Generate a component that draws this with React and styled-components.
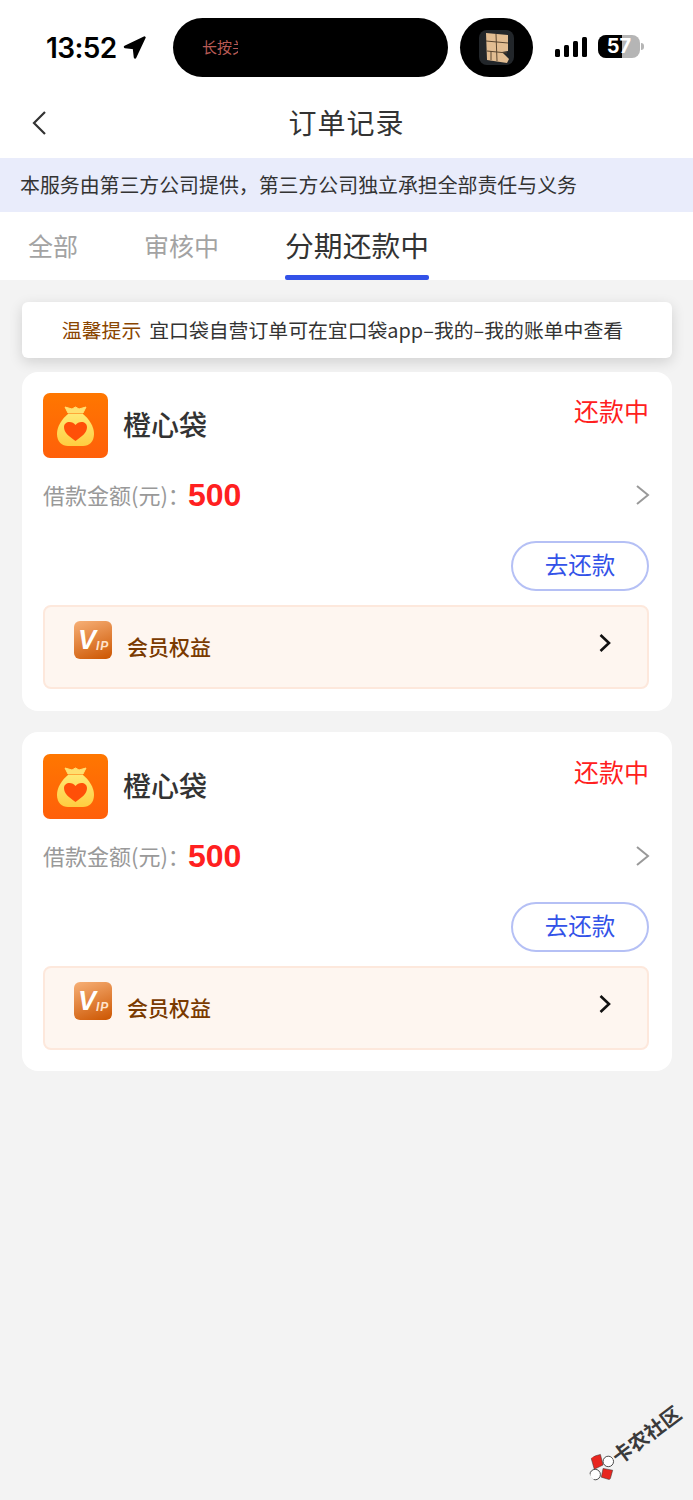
import React from 'react';
import styled, { createGlobalStyle } from 'styled-components';

const GlobalStyle = createGlobalStyle`
  html, body {
    margin: 0;
    padding: 0;
    background: #f3f3f3;
  }
  * {
    box-sizing: border-box;
  }
`;

const orders = [1, 2];

export default function App() {
  return (
    <Page>
      <GlobalStyle />
      <StatusBar>
        <Clock>
          13:52
          <svg width="23" height="23" viewBox="0 0 22 22">
            <path d="M20.5 1.5 L2 10.5 L10.5 11.5 L11.5 20.5 Z" fill="#000" stroke="#000" strokeWidth="2.4" strokeLinejoin="round" />
          </svg>
        </Clock>
        <Island>
          <IslandText>长按关注</IslandText>
        </Island>
        <IslandRound>
          <AppThumb>
            <svg width="24" height="30" viewBox="0 0 24 30">
              <path d="M1 0 L23 2 L23 18 L17 19 L20 22 L24 26 L22 30 L2 27 Z" fill="#e2bd92" />
              <path d="M1 8 L23 10 M2 18 L22 20 M11 1 L12 28 M6 18 L6 27" stroke="#5a4630" strokeWidth="1" fill="none" />
            </svg>
          </AppThumb>
        </IslandRound>
        <Signal>
          <SignalBar $h={8} />
          <SignalBar $h={12} />
          <SignalBar $h={16} />
          <SignalBar $h={20} />
        </Signal>
        <Battery>
          <BatteryLevel />
          <BatteryText>57</BatteryText>
          <BatteryCap />
        </Battery>
      </StatusBar>

      <NavBar>
        <BackButton>
          <svg width="16" height="26" viewBox="0 0 16 26">
            <path d="M14 2 L3 13 L14 24" fill="none" stroke="#333" strokeWidth="2.2" />
          </svg>
        </BackButton>
        <NavTitle>订单记录</NavTitle>
      </NavBar>

      <Notice>本服务由第三方公司提供，第三方公司独立承担全部责任与义务</Notice>

      <Tabs>
        <Tab $gap={66}>全部</Tab>
        <Tab $gap={66}>审核中</Tab>
        <Tab $active>分期还款中</Tab>
      </Tabs>

      <Content>
        <Tip>
          <TipLabel>温馨提示</TipLabel>
          宜口袋自营订单可在宜口袋app–我的–我的账单中查看
        </Tip>

        {orders.map((id) => (
          <Card key={id}>
            <CardHead>
              <ProductIcon>
                <svg width="37" height="40" viewBox="0 0 37 40">
                  <defs>
                    <linearGradient id={`bag${id}`} x1="0" y1="0" x2="0" y2="1">
                      <stop offset="0" stopColor="#ffe873" />
                      <stop offset="1" stopColor="#ffcd40" />
                    </linearGradient>
                  </defs>
                  <path d="M8 1 L15 3 L18.5 1 L22 3 L29 1 L26 7 L11 7 Z" fill="#ffdf6e" stroke="#ffdf6e" strokeLinejoin="round" />
                  <path d="M11 8 L26 8 C32 13 37 20 37 28 C37 36 32 40 26 40 L11 40 C5 40 0 36 0 28 C0 20 5 13 11 8 Z" fill={`url(#bag${id})`} />
                  <path d="M18.5 35 C12 30 7 27 7 21 C7 18 9.5 16 12.5 16 C15 16 17 17 18.5 19 C20 17 22 16 24.5 16 C27.5 16 30 18 30 21 C30 27 25 30 18.5 35 Z" fill="#ff4f08" />
                </svg>
              </ProductIcon>
              <ProductName>橙心袋</ProductName>
              <Status>还款中</Status>
            </CardHead>

            <AmountRow>
              <AmountLabel>借款金额(元)：</AmountLabel>
              <Amount>500</Amount>
              <AmountArrow width="16" height="22" viewBox="0 0 16 22">
                <path d="M2 2 L13 11 L2 20" fill="none" stroke="#999" strokeWidth="2" />
              </AmountArrow>
            </AmountRow>

            <ActionRow>
              <PayButton>去还款</PayButton>
            </ActionRow>

            <Member>
              <VipIcon>
                <VipV>V</VipV>
                <VipIp>IP</VipIp>
              </VipIcon>
              <MemberText>会员权益</MemberText>
              <svg width="14" height="20" viewBox="0 0 14 20">
                <path d="M2.5 2 L11 10 L2.5 18" fill="none" stroke="#111" strokeWidth="2.6" />
              </svg>
            </Member>
          </Card>
        ))}
      </Content>

      <Watermark>
        <svg width="28" height="28" viewBox="0 0 32 32">
          <g transform="rotate(37 16 16)">
            <path d="M3 4 L14 1 L17 13 L7 18 Z" fill="#e8261f" stroke="#333" strokeWidth="0.6" />
            <path d="M17 17 L28 19 L25 30 L15 27 Z" fill="#e8261f" stroke="#333" strokeWidth="0.6" />
            <circle cx="23" cy="9" r="6" fill="#fff" stroke="#333" />
            <circle cx="8" cy="24" r="6" fill="#fff" stroke="#333" />
          </g>
        </svg>
        <WatermarkText>卡农社区</WatermarkText>
      </Watermark>
    </Page>
  );
}

const Page = styled.div`
  position: relative;
  width: 693px;
  height: 1500px;
  overflow: hidden;
  background: #f3f3f3;
  font-family: 'Noto Sans CJK SC', 'Liberation Sans', sans-serif;
  color: #333;
`;

const StatusBar = styled.div`
  height: 92px;
  padding: 18px 0 0 46px;
  display: flex;
  align-items: flex-start;
  background: #fff;
`;

const Clock = styled.div`
  width: 127px;
  height: 59px;
  display: flex;
  align-items: center;
  gap: 6px;
  font-family: 'Inter', 'Liberation Sans', sans-serif;
  font-size: 28px;
  font-weight: 600;
  letter-spacing: -0.6px;
  color: #000;
`;

const Island = styled.div`
  width: 275px;
  height: 59px;
  padding-left: 29px;
  display: flex;
  align-items: center;
  background: #000;
  border-radius: 30px;
`;

const IslandText = styled.span`
  width: 36px;
  overflow: hidden;
  white-space: nowrap;
  margin-top: -2px;
  font-size: 15px;
  color: #b85a55;
`;

const IslandRound = styled.div`
  width: 73px;
  height: 59px;
  margin-left: 12px;
  display: flex;
  align-items: center;
  justify-content: center;
  background: #000;
  border-radius: 30px;
`;

const AppThumb = styled.div`
  width: 35px;
  height: 35px;
  display: flex;
  align-items: center;
  justify-content: center;
  background: #22262a;
  border-radius: 8px;
`;

const Signal = styled.div`
  height: 59px;
  margin-left: 22px;
  padding-bottom: 20px;
  display: flex;
  align-items: flex-end;
  gap: 4px;
`;

const SignalBar = styled.div`
  width: 5px;
  height: ${(p) => p.$h}px;
  background: #000;
  border-radius: 1.5px;
`;

const Battery = styled.div`
  position: relative;
  width: 42px;
  height: 23px;
  margin: 17px 0 0 11px;
  background: #b5b5b5;
  border-radius: 8px;
`;

const BatteryLevel = styled.div`
  width: 24px;
  height: 100%;
  background: #000;
  border-radius: 8px 0 0 8px;
`;

const BatteryText = styled.span`
  position: absolute;
  inset: 0;
  text-align: center;
  font-family: 'Inter', 'Liberation Sans', sans-serif;
  font-size: 20px;
  font-weight: 700;
  line-height: 23px;
  color: #fff;
`;

const BatteryCap = styled.div`
  position: absolute;
  right: -4px;
  top: 8px;
  width: 3px;
  height: 7px;
  background: #b5b5b5;
  border-radius: 0 3px 3px 0;
`;

const NavBar = styled.div`
  position: relative;
  height: 66px;
  display: flex;
  justify-content: center;
  background: #fff;
`;

const BackButton = styled.div`
  position: absolute;
  left: 31px;
  top: 18px;
  display: flex;
`;

const NavTitle = styled.div`
  font-size: 28px;
  line-height: 60px;
  letter-spacing: 1px;
  color: #333;
`;

const Notice = styled.div`
  height: 54px;
  padding: 0 0 2px 20px;
  display: flex;
  align-items: center;
  background: #e9ecfb;
  font-size: 19.9px;
  color: #333;
`;

const Tabs = styled.div`
  height: 68px;
  padding-left: 28px;
  display: flex;
  background: #fff;
`;

const Tab = styled.div`
  position: relative;
  margin-right: ${(p) => p.$gap || 0}px;
  font-size: ${(p) => (p.$active ? 28.8 : 25)}px;
  line-height: 66px;
  color: ${(p) => (p.$active ? '#333' : '#a3a3a3')};

  &::after {
    content: '';
    display: ${(p) => (p.$active ? 'block' : 'none')};
    position: absolute;
    left: 0;
    right: 0;
    bottom: 0;
    height: 5px;
    background: #3352e8;
    border-radius: 2px;
  }
`;

const Content = styled.div`
  padding: 22px 21px 0 22px;
`;

const Tip = styled.div`
  height: 56px;
  margin-bottom: 14px;
  padding: 0 9px 2px 0;
  display: flex;
  align-items: center;
  justify-content: center;
  background: #fff;
  border-radius: 6px;
  box-shadow: 0 4px 14px rgba(0, 0, 0, 0.14);
  font-size: 19.85px;
  color: #333;
`;

const TipLabel = styled.span`
  margin-right: 8px;
  color: #8a4500;
`;

const Card = styled.div`
  height: 339px;
  margin-bottom: 21px;
  padding: 21px 23px 0 21px;
  background: #fff;
  border-radius: 16px;

  &:last-child {
    padding-top: 22px;
  }
`;

const CardHead = styled.div`
  height: 65px;
  display: flex;
  align-items: center;
`;

const ProductIcon = styled.div`
  width: 65px;
  height: 65px;
  display: flex;
  align-items: center;
  justify-content: center;
  background: linear-gradient(180deg, #ff7700, #ff5f0a);
  border-radius: 7px;
`;

const ProductName = styled.div`
  margin: -4px 0 0 15px;
  font-size: 28px;
  font-weight: 500;
  color: #333;
`;

const Status = styled.div`
  margin: -32px 0 0 auto;
  font-size: 25px;
  color: #ff2020;
`;

const AmountRow = styled.div`
  height: 74px;
  display: flex;
  align-items: center;
`;

const AmountLabel = styled.span`
  flex-shrink: 0;
  width: 145px;
  margin-top: -2px;
  white-space: nowrap;
  font-size: 22px;
  color: #999;
`;

const Amount = styled.span`
  margin-right: auto;
  font-family: 'Liberation Sans', sans-serif;
  font-size: 32px;
  font-weight: 700;
  color: #ff2020;
`;

const AmountArrow = styled.svg`
  margin-right: -2px;
`;

const ActionRow = styled.div`
  height: 73px;
  padding-top: 9px;
  display: flex;
  justify-content: flex-end;
`;

const PayButton = styled.div`
  width: 138px;
  height: 50px;
  padding-bottom: 5px;
  display: flex;
  align-items: center;
  justify-content: center;
  border: 2px solid #b5c0f5;
  border-radius: 25px;
  font-size: 23.5px;
  color: #3352e8;
`;

const Member = styled.div`
  height: 84px;
  padding: 0 35px 8px 29px;
  display: flex;
  align-items: center;
  background: #fef6f0;
  border: 2px solid #fde8dc;
  border-radius: 8px;
`;

const VipIcon = styled.div`
  position: relative;
  width: 38px;
  height: 38px;
  margin-top: -6px;
  background: linear-gradient(160deg, #f7b077, #cc5500);
  border-radius: 6px;
  overflow: hidden;
  font-family: 'Liberation Sans', sans-serif;
  font-style: italic;
  font-weight: 700;
  color: #fff;
`;

const VipV = styled.span`
  position: absolute;
  left: 4px;
  top: 5px;
  font-size: 27px;
  line-height: 28px;
`;

const VipIp = styled.span`
  position: absolute;
  left: 22px;
  top: 19px;
  font-size: 12px;
  line-height: 12px;
  letter-spacing: 1px;
  color: #ffe3cc;
`;

const MemberText = styled.div`
  margin: 6px auto 0 15px;
  font-size: 21px;
  font-weight: 500;
  color: #7a3a00;
`;

const Watermark = styled.div`
  position: absolute;
  left: 591px;
  top: 1462px;
  display: flex;
  align-items: center;
  gap: 1px;
  transform: rotate(-37deg);
  transform-origin: left center;
`;

const WatermarkText = styled.span`
  font-size: 20px;
  font-weight: 700;
  line-height: 28px;
  white-space: nowrap;
  color: #3a3a3a;
`;
